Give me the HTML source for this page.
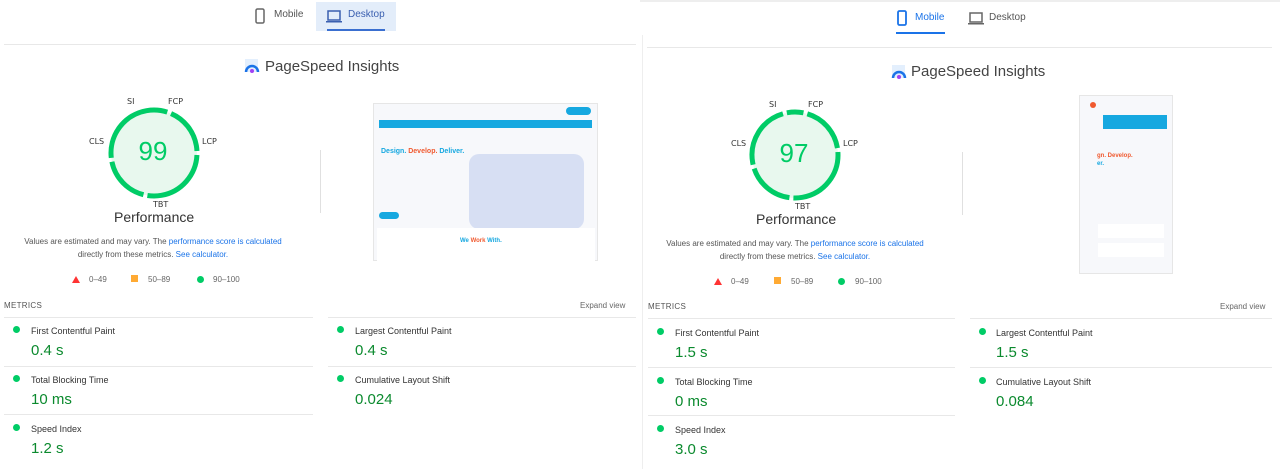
<!DOCTYPE html><html><head><style>
*{margin:0;padding:0;box-sizing:border-box}
body{width:1280px;height:469px;background:#fff;font-family:"Liberation Sans",sans-serif;position:relative;overflow:hidden;color:#333}
.a{position:absolute;white-space:nowrap}
.tab{font-size:10px;color:#555}
.h{height:1px;background:#e8e8e8;position:absolute}
.title{font-size:15px;color:#444}
.lbl{font-size:8px;color:#333;font-family:"DejaVu Sans",sans-serif}
.perf{font-size:14px;color:#333}
.note{font-size:8px;color:#555;text-align:center;line-height:13px;width:300px}
.note span{color:#1a73e8}
.leg{font-size:8px;color:#666}
.met{font-size:8px;color:#555;letter-spacing:.3px}
.ml{font-size:9px;color:#333}
.mv{font-size:15px;color:#0b8a2e}
.dot{width:7px;height:7px;border-radius:50%;background:#0c6}
.score{font-size:26px;color:#0c6;text-align:center;width:90px}
</style></head><body>
<!-- left panel -->
<div class="a" style="left:316px;top:2px;width:80px;height:29px;background:#e3edfa"></div>
<div class="a" style="left:327px;top:29px;width:58px;height:2px;background:#3a6fd0"></div>
<svg class="a" style="left:255px;top:8px" width="10" height="16"><rect x="1" y="1" width="8" height="14" rx="1.5" fill="none" stroke="#666" stroke-width="1.5"/></svg>
<div class="a tab" style="left:274px;top:9px">Mobile</div>
<svg class="a" style="left:326px;top:10px" width="16" height="13"><rect x="2" y="1" width="12" height="9" fill="none" stroke="#3a5fb0" stroke-width="1.5"/><rect x="0" y="11" width="16" height="1.5" fill="#3a5fb0"/></svg>
<div class="a tab" style="left:348px;top:9px;color:#3a5fb0">Desktop</div>
<div class="h" style="left:4px;top:44px;width:632px"></div>
<svg class="a" style="left:244px;top:58px" width="16" height="16"><rect x="1" y="1" width="13" height="13" fill="#e3effd"/><path d="M2 14a6 6 0 0 1 12 0" fill="none" stroke="#1a73e8" stroke-width="2.5"/><circle cx="8" cy="13" r="2" fill="#a142f4"/></svg>
<div class="a title" style="left:265px;top:58px">PageSpeed Insights</div>
<svg class="a" style="left:106px;top:105px" width="96" height="96"><circle cx="48" cy="48" r="43" fill="#e8f8ee"/><g transform="rotate(-100 48 48)"><circle cx="48" cy="48" r="43" fill="none" stroke="#0c6" stroke-width="5" stroke-dasharray="21 4 48 4 72 4 48 4 65 4"/></g></svg>
<div class="a score" style="left:108px;top:136px">99</div>
<div class="a lbl" style="left:127px;top:97px">SI</div>
<div class="a lbl" style="left:168px;top:97px">FCP</div>
<div class="a lbl" style="left:202px;top:137px">LCP</div>
<div class="a lbl" style="left:89px;top:137px">CLS</div>
<div class="a lbl" style="left:153px;top:200px">TBT</div>
<div class="a perf" style="left:114px;top:209px">Performance</div>
<div class="a" style="left:320px;top:150px;width:1px;height:63px;background:#e0e0e0"></div>
<div class="a" style="left:373px;top:103px;width:225px;height:158px;border:1px solid #e6e6e6;background:#f7f8fb">
 <div class="a" style="left:5px;top:16px;width:213px;height:8px;background:#16a8e0"></div>
 <div class="a" style="left:192px;top:3px;width:25px;height:8px;border-radius:4px;background:#16a8e0"></div>
 <div class="a" style="left:7px;top:44px;font-size:7px;font-weight:bold;color:#16a8e0">Design. <span style="color:#f05a30">Develop.</span> Deliver.</div>
 <div class="a" style="left:5px;top:108px;width:20px;height:7px;border-radius:4px;background:#16a8e0"></div>
 <div class="a" style="left:95px;top:50px;width:115px;height:75px;background:#c9d4f0;border-radius:10px;opacity:.7"></div>
 <div class="a" style="left:3px;top:124px;width:218px;height:33px;background:#fff"></div>
 <div class="a" style="left:86px;top:134px;font-size:6px;font-weight:bold;color:#16a8e0">We <span style="color:#f05a30">Work</span> With.</div>
</div>
<div class="a note" style="left:3px;top:235px">Values are estimated and may vary. The <span>performance score is calculated</span><br>directly from these metrics. <span>See calculator.</span></div>
<svg class="a" style="left:72px;top:276px" width="8" height="7"><path d="M4 0L8 7H0z" fill="#f33"/></svg>
<div class="a leg" style="left:89px;top:275px">0–49</div>
<div class="a" style="left:131px;top:275px;width:7px;height:7px;background:#fa3"></div>
<div class="a leg" style="left:148px;top:275px">50–89</div>
<div class="a dot" style="left:197px;top:276px"></div>
<div class="a leg" style="left:213px;top:275px">90–100</div>
<div class="a met" style="left:4px;top:301px">METRICS</div>
<div class="a leg" style="left:580px;top:301px">Expand view</div>
<div class="h" style="left:4px;top:317px;width:309px"></div><div class="h" style="left:328px;top:317px;width:308px"></div>
<div class="h" style="left:4px;top:366px;width:309px"></div><div class="h" style="left:328px;top:366px;width:308px"></div>
<div class="h" style="left:4px;top:414px;width:309px"></div>
<div class="a dot" style="left:13px;top:326px"></div><div class="a ml" style="left:31px;top:326px">First Contentful Paint</div><div class="a mv" style="left:31px;top:342px">0.4 s</div>
<div class="a dot" style="left:337px;top:326px"></div><div class="a ml" style="left:355px;top:326px">Largest Contentful Paint</div><div class="a mv" style="left:355px;top:342px">0.4 s</div>
<div class="a dot" style="left:13px;top:375px"></div><div class="a ml" style="left:31px;top:375px">Total Blocking Time</div><div class="a mv" style="left:31px;top:391px">10 ms</div>
<div class="a dot" style="left:337px;top:375px"></div><div class="a ml" style="left:355px;top:375px">Cumulative Layout Shift</div><div class="a mv" style="left:355px;top:391px">0.024</div>
<div class="a dot" style="left:13px;top:424px"></div><div class="a ml" style="left:31px;top:424px">Speed Index</div><div class="a mv" style="left:31px;top:440px">1.2 s</div>

<!-- divider -->
<div class="a" style="left:640px;top:0;width:640px;height:2px;background:#eee"></div>
<div class="a" style="left:642px;top:35px;width:1px;height:434px;background:#eee"></div>

<!-- right panel -->
<svg class="a" style="left:897px;top:10px" width="10" height="16"><rect x="1" y="1" width="8" height="14" rx="1.5" fill="none" stroke="#1a73e8" stroke-width="1.8"/></svg>
<div class="a tab" style="left:915px;top:12px;color:#1a73e8">Mobile</div>
<div class="a" style="left:896px;top:32px;width:49px;height:2px;background:#1a73e8"></div>
<svg class="a" style="left:968px;top:12px" width="16" height="13"><rect x="2" y="1" width="12" height="9" fill="none" stroke="#666" stroke-width="1.5"/><rect x="0" y="11" width="16" height="1.5" fill="#666"/></svg>
<div class="a tab" style="left:989px;top:12px">Desktop</div>
<div class="h" style="left:647px;top:47px;width:625px"></div>
<svg class="a" style="left:891px;top:64px" width="16" height="16"><rect x="1" y="1" width="13" height="13" fill="#e3effd"/><path d="M2 14a6 6 0 0 1 12 0" fill="none" stroke="#1a73e8" stroke-width="2.5"/><circle cx="8" cy="13" r="2" fill="#a142f4"/></svg>
<div class="a title" style="left:911px;top:63px">PageSpeed Insights</div>
<svg class="a" style="left:747px;top:107px" width="96" height="96"><circle cx="48" cy="48" r="43" fill="#e8f8ee"/><g transform="rotate(-100 48 48)"><circle cx="48" cy="48" r="43" fill="none" stroke="#0c6" stroke-width="5" stroke-dasharray="16 4 48 4 72 4 48 4 65 4 5 0"/></g></svg>
<div class="a score" style="left:749px;top:138px">97</div>
<div class="a lbl" style="left:769px;top:100px">SI</div>
<div class="a lbl" style="left:808px;top:100px">FCP</div>
<div class="a lbl" style="left:843px;top:139px">LCP</div>
<div class="a lbl" style="left:731px;top:139px">CLS</div>
<div class="a lbl" style="left:795px;top:202px">TBT</div>
<div class="a perf" style="left:756px;top:211px">Performance</div>
<div class="a" style="left:962px;top:152px;width:1px;height:63px;background:#e0e0e0"></div>
<div class="a" style="left:1079px;top:95px;width:94px;height:179px;border:1px solid #e6e6e6;background:#f7f8fb">
 <div class="a" style="left:10px;top:6px;width:6px;height:6px;border-radius:50%;background:#f05a30"></div>
 <div class="a" style="left:23px;top:19px;width:64px;height:14px;background:#16a8e0"></div>
 <div class="a" style="left:17px;top:56px;font-size:6px;font-weight:bold;color:#f05a30;line-height:8px">gn. Develop.<br><span style="color:#16a8e0">er.</span></div>
 <div class="a" style="left:18px;top:128px;width:66px;height:14px;background:#fff"></div>
 <div class="a" style="left:18px;top:147px;width:66px;height:14px;background:#fff"></div>
</div>
<div class="a note" style="left:645px;top:237px">Values are estimated and may vary. The <span>performance score is calculated</span><br>directly from these metrics. <span>See calculator.</span></div>
<svg class="a" style="left:714px;top:278px" width="8" height="7"><path d="M4 0L8 7H0z" fill="#f33"/></svg>
<div class="a leg" style="left:731px;top:277px">0–49</div>
<div class="a" style="left:774px;top:277px;width:7px;height:7px;background:#fa3"></div>
<div class="a leg" style="left:791px;top:277px">50–89</div>
<div class="a dot" style="left:838px;top:278px"></div>
<div class="a leg" style="left:855px;top:277px">90–100</div>
<div class="a met" style="left:648px;top:302px">METRICS</div>
<div class="a leg" style="left:1220px;top:302px">Expand view</div>
<div class="h" style="left:648px;top:318px;width:307px"></div><div class="h" style="left:970px;top:318px;width:302px"></div>
<div class="h" style="left:648px;top:367px;width:307px"></div><div class="h" style="left:970px;top:367px;width:302px"></div>
<div class="h" style="left:648px;top:415px;width:307px"></div>
<div class="a dot" style="left:657px;top:328px"></div><div class="a ml" style="left:675px;top:328px">First Contentful Paint</div><div class="a mv" style="left:675px;top:344px">1.5 s</div>
<div class="a dot" style="left:979px;top:328px"></div><div class="a ml" style="left:996px;top:328px">Largest Contentful Paint</div><div class="a mv" style="left:996px;top:344px">1.5 s</div>
<div class="a dot" style="left:657px;top:377px"></div><div class="a ml" style="left:675px;top:377px">Total Blocking Time</div><div class="a mv" style="left:675px;top:393px">0 ms</div>
<div class="a dot" style="left:979px;top:377px"></div><div class="a ml" style="left:996px;top:377px">Cumulative Layout Shift</div><div class="a mv" style="left:996px;top:393px">0.084</div>
<div class="a dot" style="left:657px;top:425px"></div><div class="a ml" style="left:675px;top:425px">Speed Index</div><div class="a mv" style="left:675px;top:441px">3.0 s</div>
</body></html>
